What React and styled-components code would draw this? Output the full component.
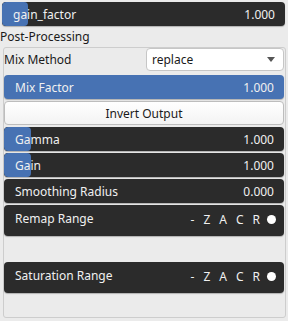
import React from 'react';
import styled, { createGlobalStyle } from 'styled-components';

const GlobalStyle = createGlobalStyle`
  html, body {
    margin: 0;
    padding: 0;
    background: #ebebeb;
    font-family: "Noto Sans", "Open Sans", sans-serif;
    font-size: 12px;
  }
`;

const Page = styled.div`
  width: 288px;
  height: 321px;
  box-sizing: border-box;
  padding: 2px 2px 0 2px;
  display: flex;
  flex-direction: column;
`;

const Slider = styled.div`
  position: relative;
  height: ${({ h }) => h || 24}px;
  border-radius: 4px;
  background: ${({ full }) => (full ? '#4772b3' : '#2b2b2b')};
  color: #f0f0f0;
  display: flex;
  align-items: center;
  justify-content: space-between;
  padding: 0 10px 0 11px;
  overflow: hidden;
  box-sizing: border-box;
  margin-bottom: ${({ mb }) => (mb === undefined ? 2 : mb)}px;
  margin-right: ${({ mr }) => mr || 0}px;
  box-shadow: 0 1px 1px rgba(0, 0, 0, 0.25);
`;

const Fill = styled.div`
  position: absolute;
  left: 0;
  top: 0;
  bottom: 0;
  background: #4772b3;
  border-radius: 4px;
`;

const Label = styled.span`
  position: relative;
`;

const SectionTitle = styled.div`
  color: #1a1a1a;
  height: 21px;
  line-height: 21px;
  margin-left: -2px;
`;

const Panel = styled.div`
  flex: 1;
  margin: 0 0 3px 1px;
  border: 1px solid #cdcdcd;
  border-radius: 3px;
  display: flex;
  flex-direction: column;
`;

const FieldRow = styled.div`
  display: flex;
  align-items: center;
  height: 23px;
  margin-bottom: 4px;
`;

const FieldLabel = styled.div`
  width: 142px;
  color: #1a1a1a;
`;

const Dropdown = styled.div`
  flex: 1;
  height: 23px;
  box-sizing: border-box;
  background: #fff;
  border: 1px solid #c6c6c6;
  border-radius: 4px;
  display: flex;
  align-items: center;
  justify-content: space-between;
  padding: 0 8px 0 5px;
  color: #1a1a1a;
  margin-right: 1px;
`;

const Arrow = styled.span`
  width: 0;
  height: 0;
  border-left: 4px solid transparent;
  border-right: 4px solid transparent;
  border-top: 5px solid #555;
`;

const Inner = styled.div`
  padding: 0 1px 0 0;
  display: flex;
  flex-direction: column;
`;

const Button = styled.div`
  height: 24px;
  box-sizing: border-box;
  border: 1px solid #bdbdbd;
  border-radius: 4px;
  background: linear-gradient(#ffffff, #f3f3f3);
  color: #1a1a1a;
  display: flex;
  align-items: center;
  justify-content: center;
  margin-bottom: 2px;
`;

const RangeRow = styled(Slider)`
  align-items: flex-start;
  padding: 5px 8px 0 11px;
`;

const Flags = styled.span`
  display: flex;
  align-items: center;
  gap: 9px;
  padding-top: 1px;
`;

const Dot = styled.span`
  width: 9px;
  height: 9px;
  border-radius: 50%;
  background: #fff;
  margin-left: -2px;
`;

const Spacer = styled.div`
  height: 26px;
`;

const ValueSlider = ({ label, value, pct, full, mb, mr }) => (
  <Slider full={full} mb={mb} mr={mr}>
    {!full && pct > 0 && <Fill style={{ width: `${pct}px` }} />}
    <Label>{label}</Label>
    <Label>{value}</Label>
  </Slider>
);

const RangeField = ({ label }) => (
  <RangeRow h={31} mb={0}>
    <Label>{label}</Label>
    <Flags>
      <span>-</span>
      <span>Z</span>
      <span>A</span>
      <span>C</span>
      <span>R</span>
      <Dot />
    </Flags>
  </RangeRow>
);

export default function App() {
  return (
    <>
      <GlobalStyle />
      <Page>
        <ValueSlider label="gain_factor" value="1.000" pct={26} mb={0} mr={1} />
        <SectionTitle>Post-Processing</SectionTitle>
        <Panel>
          <FieldRow>
            <FieldLabel>Mix Method</FieldLabel>
            <Dropdown>
              <span>replace</span>
              <Arrow />
            </Dropdown>
          </FieldRow>
          <Inner>
            <ValueSlider label="Mix Factor" value="1.000" full />
            <Button>Invert Output</Button>
            <ValueSlider label="Gamma" value="1.000" pct={27} />
            <ValueSlider label="Gain" value="1.000" pct={27} />
            <ValueSlider label="Smoothing Radius" value="0.000" pct={0} />
            <RangeField label="Remap Range" />
            <Spacer />
            <RangeField label="Saturation Range" />
          </Inner>
        </Panel>
      </Page>
    </>
  );
}
